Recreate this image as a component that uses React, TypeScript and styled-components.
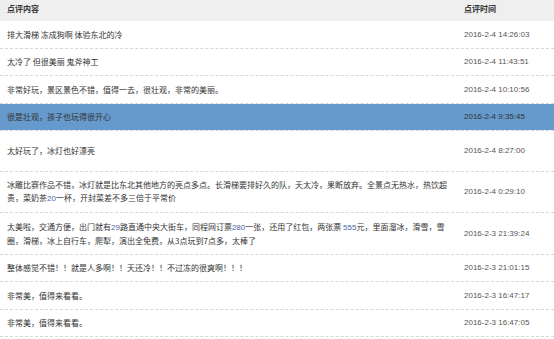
import React from "react"
import styled, { createGlobalStyle } from "styled-components"

const GlobalStyle = createGlobalStyle`
  html, body {
    margin: 0;
    padding: 0;
    background: #fff;
  }
  body {
    font-family: "Liberation Sans", "Noto Sans CJK SC", sans-serif;
    font-size: 8px;
    color: #333;
  }
`

type Review = {
  content: React.ReactNode
  time: string
  active?: boolean
  tall?: boolean
}

const reviews: Review[] = [
  { content: "排大滑梯 冻成狗啊 体验东北的冷", time: "2016-2-4 14:26:03" },
  { content: "太冷了 但很美丽 鬼斧神工", time: "2016-2-4 11:43:51" },
  {
    content: "非常好玩，景区景色不错，值得一去，很壮观，非常的美丽。",
    time: "2016-2-4 10:10:56",
  },
  {
    content: "很是壮观，孩子也玩得很开心",
    time: "2016-2-4 9:35:45",
    active: true,
  },
  { content: "太好玩了，冰灯也好漂亮", time: "2016-2-4 8:27:00", tall: true },
  {
    content: (
      <>
        冰雕比赛作品不错，冰灯就是比东北其他地方的亮点多点。长滑梯要排好久的队，天太冷，果断放弃。全景点无热水，热饮超贵，菜奶茶
        <Num>20</Num>一杯，开封菜差不多三倍于平常价
      </>
    ),
    time: "2016-2-4 0:29:10",
  },
  {
    content: (
      <>
        太美啦，交通方便，出门就有<Num>29</Num>路直通中央大街车，同程网订票
        <Num>280</Num>一张，还用了红包，两张票 <Num>555</Num>
        元，里面溜冰，滑雪，雪圈，滑梯，冰上自行车，爬犁，演出全免费，从3点玩到7点多，太棒了
      </>
    ),
    time: "2016-2-3 21:39:24",
  },
  {
    content: "整体感觉不错！！就是人多啊！！天还冷！！不过冻的很爽啊！！！",
    time: "2016-2-3 21:01:15",
  },
  { content: "非常美，值得来看看。", time: "2016-2-3 16:47:17" },
  { content: "非常美，值得来看看。", time: "2016-2-3 16:47:05" },
]

const App = () => {
  return (
    <>
      <GlobalStyle />
      <Table>
        <HeadRow>
          <HeadCell>点评内容</HeadCell>
          <HeadCell>点评时间</HeadCell>
        </HeadRow>
        {reviews.map((r, i) => (
          <Row key={i} $active={r.active}>
            <Content $tall={r.tall}>{r.content}</Content>
            <Time $active={r.active}>{r.time}</Time>
          </Row>
        ))}
      </Table>
    </>
  )
}

function Num({ children }: { children: React.ReactNode }) {
  return <NumText>{children}</NumText>
}

const Table = styled.div`
  width: 100%;
  display: flex;
  flex-direction: column;
`

const HeadRow = styled.div`
  display: grid;
  grid-template-columns: 457px 1fr;
  height: 21px;
  background: #efefef;
`

const HeadCell = styled.div`
  padding: 3px 0 0 7px;
  line-height: 11px;
  font-family: "Noto Sans CJK SC", sans-serif;
  font-weight: bold;
  color: #333;
`

const Row = styled.div<{ $active?: boolean }>`
  display: grid;
  grid-template-columns: 457px 1fr;
  align-items: center;
  border-bottom: 1px dashed #d6d6d6;
  background: ${(p) => (p.$active ? "#6699cc" : "#fff")};
  background-clip: padding-box;
`

const Content = styled.div<{ $tall?: boolean }>`
  padding: ${(p) => (p.$tall ? "13.25px" : "6.75px")} 4px
    ${(p) => (p.$tall ? "13.25px" : "6.75px")} 7px;
  line-height: 13px;
  font-family: "Noto Sans CJK SC", sans-serif;
  color: #333;
`

const Time = styled.div<{ $active?: boolean }>`
  padding-left: 7px;
  line-height: 13px;
  color: ${(p) => (p.$active ? "#333" : "#555")};
  white-space: nowrap;
`

const NumText = styled.span`
  font-family: "Liberation Sans", sans-serif;
  color: #4a63a8;
`

export default App
